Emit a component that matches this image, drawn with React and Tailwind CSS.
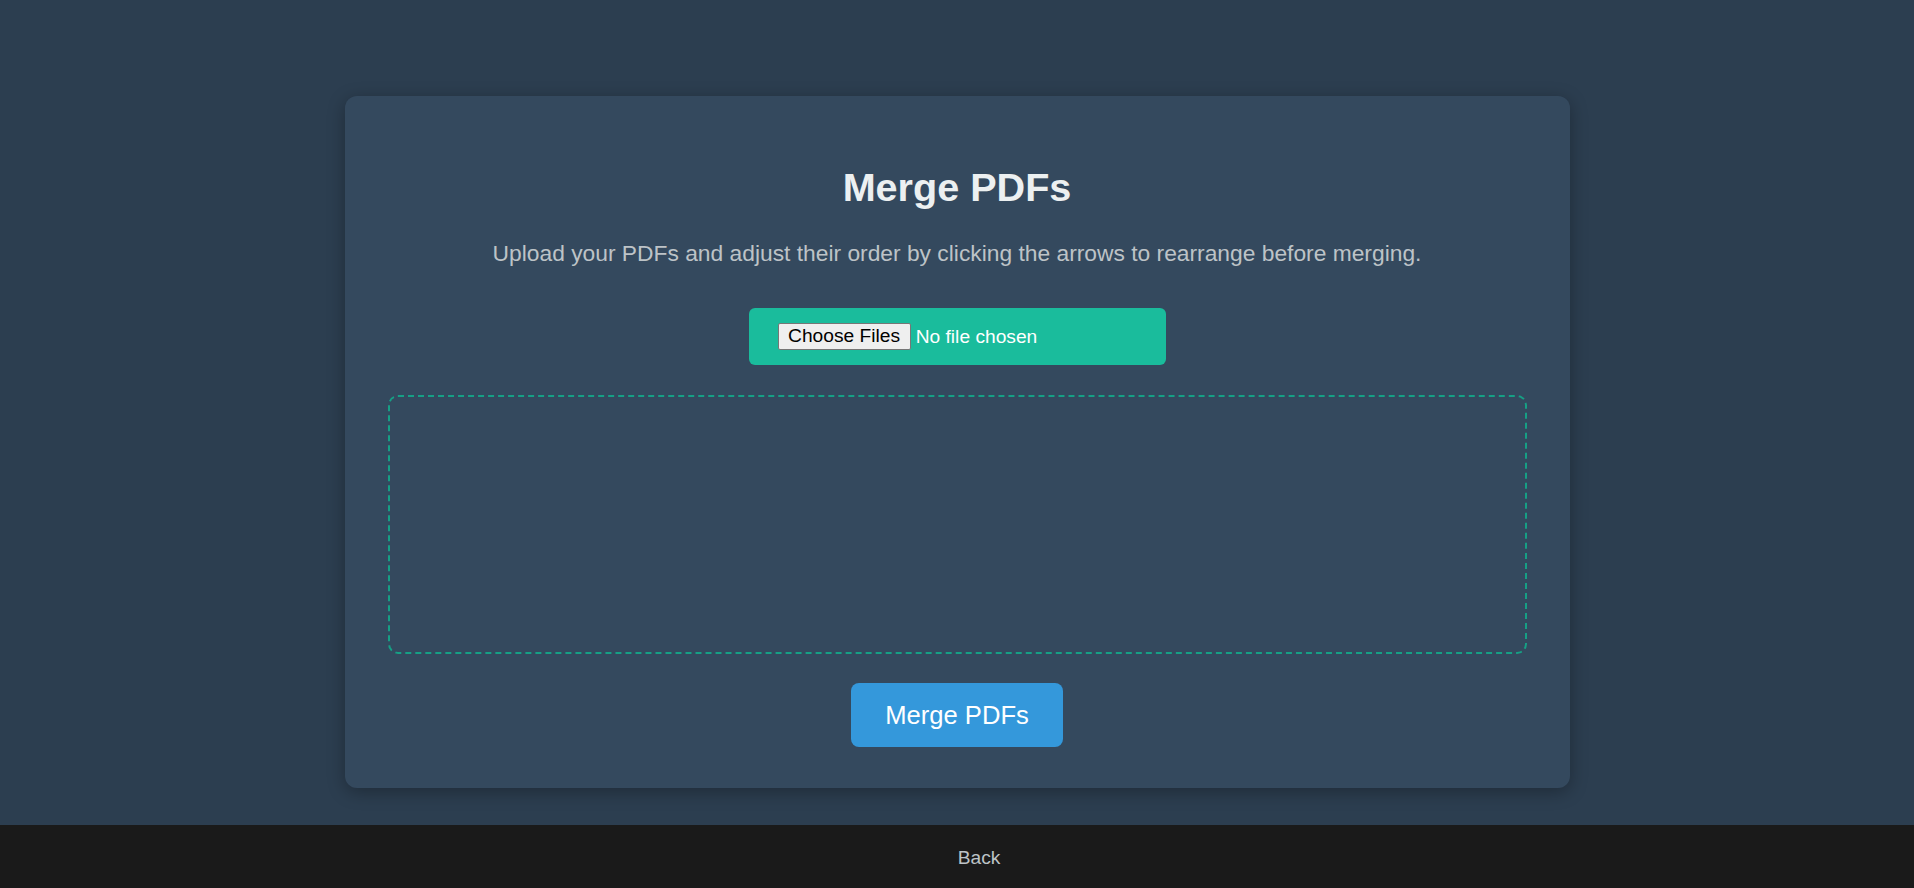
export default function App() {
  return (
    <div className="flex min-h-screen flex-col bg-[#2c3e50] font-['Liberation_Sans',Arial,sans-serif]">
      <main className="flex-1 pt-[96px]">
        <div className="mx-auto w-[1225px] rounded-[12px] bg-[#34495e] px-[43px] pb-[41px] pt-[69px] shadow-[0_4px_18px_rgba(0,0,0,0.3)]">
          <h1 className="text-center text-[39.6px] font-bold leading-[44px] text-[#ecf0f1]">Merge PDFs</h1>
          <p className="mt-[31px] text-center text-[22.8px] leading-[26px] text-[#bdc3c7]">
            Upload your PDFs and adjust their order by clicking the arrows to rearrange before merging.
          </p>

          <div className="mt-[42px] flex justify-center">
            <input
              type="file"
              multiple
              accept="application/pdf"
              className="box-border h-[57px] w-[417px] cursor-pointer rounded-[6px] bg-[#1abc9c] px-[29px] py-[14.5px] text-[19.2px] leading-[22px] text-white file:mr-[5px] file:rounded-[2px] file:border file:border-solid file:border-[#767676] file:bg-[#efefef] file:px-[9.6px] file:py-[1.6px] file:text-black"
            />
          </div>

          <div className="mt-[30px] h-[259px] rounded-[10px] border-2 border-dashed border-[#16a085]" />

          <div className="mt-[29px] flex justify-center">
            <button className="h-[64px] w-[212px] rounded-[8px] bg-[#3498db] text-[25.6px] text-white">Merge PDFs</button>
          </div>
        </div>
      </main>

      <footer className="flex h-[63px] items-center justify-center bg-[#1a1a1a] pt-[4px]">
        <a href="#" className="ml-[44px] text-[19.2px] text-[#bdc3c7]">
          Back
        </a>
      </footer>
    </div>
  )
}
